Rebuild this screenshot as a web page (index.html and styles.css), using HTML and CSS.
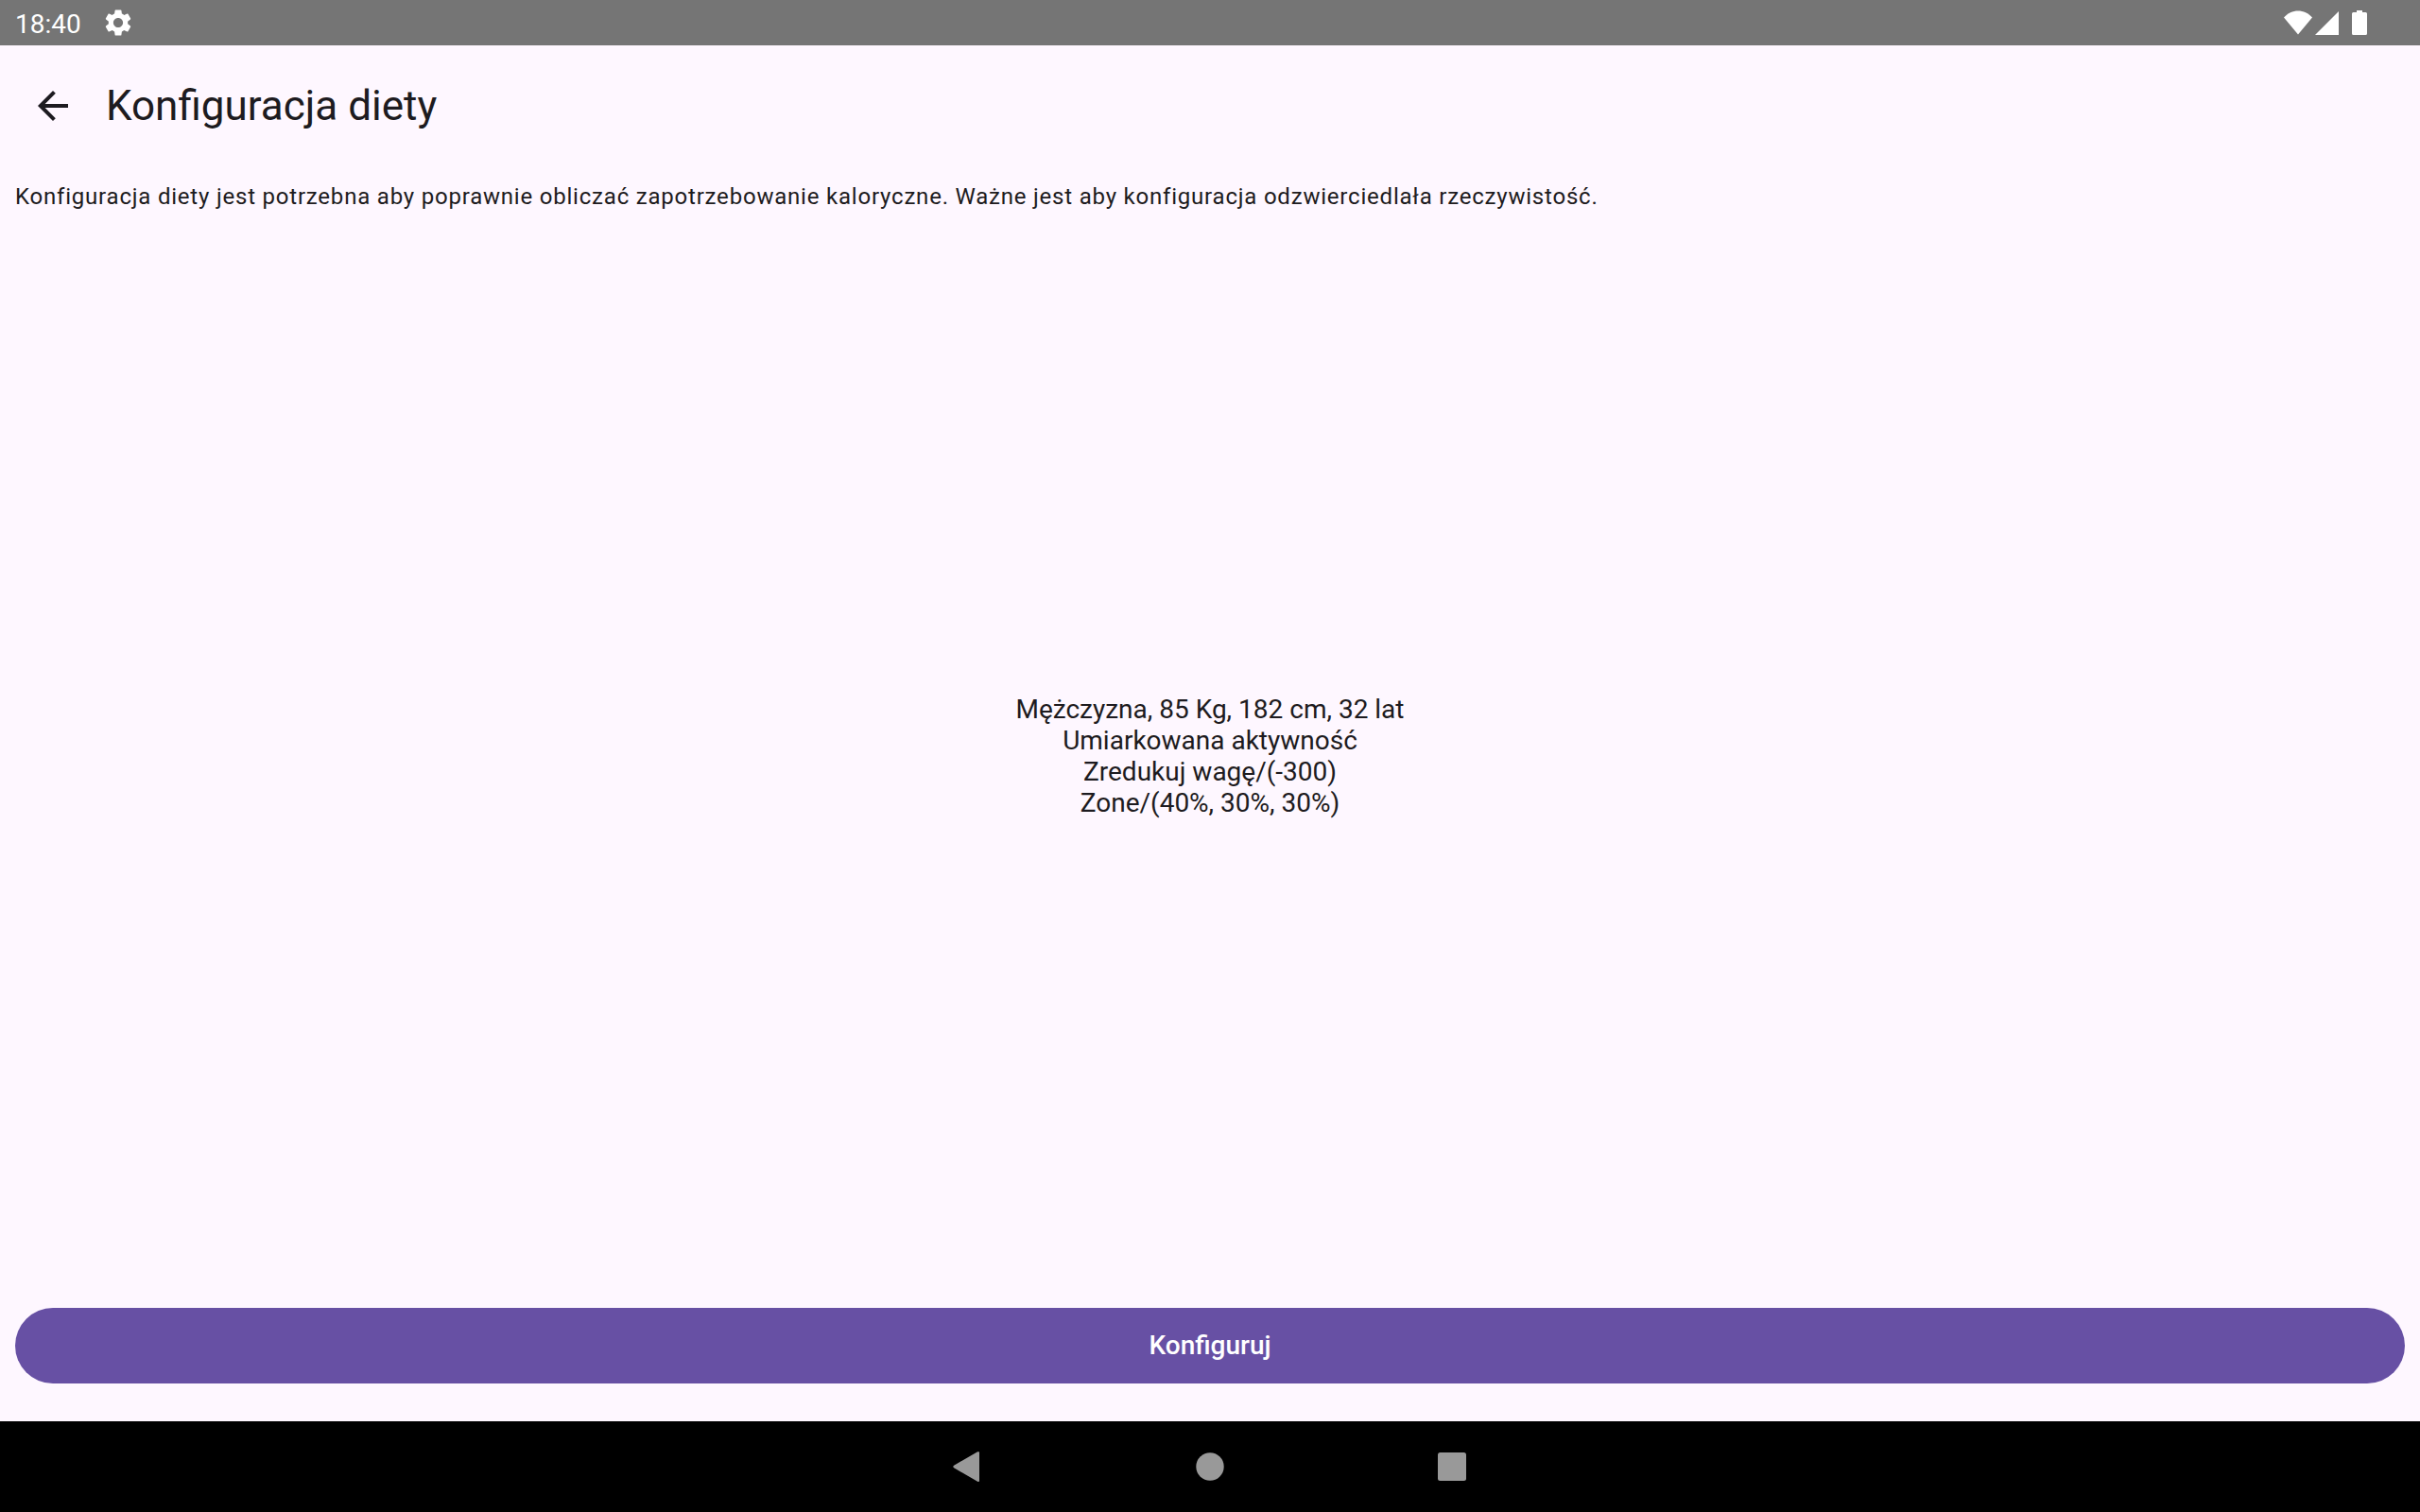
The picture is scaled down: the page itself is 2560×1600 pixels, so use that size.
FILE: index.html
```html
<!DOCTYPE html>
<html lang="pl">
<head>
<meta charset="utf-8">
<meta name="viewport" content="width=device-width, initial-scale=1">
<title>Konfiguracja diety</title>
<link rel="stylesheet" href="styles.css">
</head>
<body>
<div class="status-bar">
  <div class="status-start">
    <time class="clock">18:40</time>
    <svg class="gear" viewBox="0 0 24 24" aria-hidden="true"><path d="M19.14 12.94c.04-.3.06-.61.06-.94 0-.32-.02-.64-.07-.94l2.03-1.58c.18-.14.23-.41.12-.61l-1.92-3.32c-.12-.22-.37-.29-.59-.22l-2.39.96c-.5-.38-1.03-.7-1.62-.94l-.36-2.54c-.04-.24-.24-.41-.48-.41h-3.84c-.24 0-.43.17-.47.41l-.36 2.54c-.59.24-1.13.57-1.62.94l-2.39-.96c-.22-.08-.47 0-.59.22L2.74 8.87c-.12.21-.08.47.12.61l2.03 1.58c-.05.3-.09.63-.09.94s.02.64.07.94l-2.03 1.58c-.18.14-.23.41-.12.61l1.92 3.32c.12.22.37.29.59.22l2.39-.96c.5.38 1.03.7 1.62.94l.36 2.54c.05.24.24.41.48.41h3.84c.24 0 .44-.17.47-.41l.36-2.54c.59-.24 1.13-.56 1.62-.94l2.39.96c.22.08.47 0 .59-.22l1.92-3.32c.12-.22.07-.47-.12-.61l-2.01-1.58zM12 15.6c-1.98 0-3.6-1.62-3.6-3.6s1.62-3.6 3.6-3.6 3.6 1.62 3.6 3.6-1.62 3.6-3.6 3.6z"/></svg>
  </div>
  <div class="status-end">
    <svg class="wifi" viewBox="0 0 30 26" aria-hidden="true"><path d="M15 25.500L0 7.500C4 3 9.500 0.500 15 0.500S26 3 30 7.500Z"/></svg>
    <svg class="signal" viewBox="0 0 26 26" aria-hidden="true"><path d="M0 26L25 1V26Z"/></svg>
    <svg class="battery" viewBox="0 0 16 26" aria-hidden="true"><path d="M5 0H11V2H14.500Q16 2 16 3.500V24.500Q16 26 14.500 26H1.500Q0 26 0 24.500V3.500Q0 2 1.500 2H5Z"/></svg>
  </div>
</div>
<header class="app-bar">
  <button class="back" type="button" aria-label="Wstecz">
    <svg viewBox="0 0 24 24" aria-hidden="true"><path d="M20 11H7.830l5.590-5.590L12 4l-8 8 8 8 1.410-1.410L7.830 13H20v-2z"/></svg>
  </button>
  <h1 class="title">Konfiguracja diety</h1>
</header>
<main class="content">
  <p class="intro">Konfiguracja diety jest potrzebna aby poprawnie obliczać zapotrzebowanie kaloryczne. Ważne jest aby konfiguracja odzwierciedlała rzeczywistość.</p>
  <div class="summary">
    <p>Mężczyzna, 85 Kg, 182 cm, 32 lat</p>
    <p>Umiarkowana aktywność</p>
    <p>Zredukuj wagę/(-300)</p>
    <p>Zone/(40%, 30%, 30%)</p>
  </div>
  <button class="configure" type="button">Konfiguruj</button>
</main>
<nav class="nav-bar" aria-label="System">
  <button class="nav-button" type="button" aria-label="Wstecz"><svg viewBox="0 0 40 40" aria-hidden="true"><path d="M32 5.500V34.500Q32 37 29.700 35.500L5.500 21.500Q3 20 5.500 18.500L29.700 4.500Q32 3 32 5.500Z"/></svg></button>
  <button class="nav-button" type="button" aria-label="Ekran główny"><svg viewBox="0 0 40 40" aria-hidden="true"><circle cx="20" cy="20" r="14.700"/></svg></button>
  <button class="nav-button" type="button" aria-label="Ostatnie"><svg viewBox="0 0 40 40" aria-hidden="true"><rect x="5" y="5" width="30" height="30" rx="2.500"/></svg></button>
</nav>
</body>
</html>
```
FILE: styles.css
```css
* {
  box-sizing: border-box;
}

body {
  display: flex;
  flex-direction: column;
  min-height: 100vh;
  margin: 0;
  background: #fef7ff;
  color: #1d1b20;
  font-family: Roboto, "Liberation Sans", sans-serif;
}

p,
h1 {
  margin: 0;
}

button {
  border: 0;
  padding: 0;
  font-family: inherit;
  cursor: pointer;
}

svg {
  display: block;
  fill: currentColor;
}

.status-bar {
  display: flex;
  justify-content: space-between;
  align-items: center;
  height: 48px;
  padding: 0 56px 0 16px;
  background: #757575;
  color: #fff;
}

.status-start,
.status-end {
  display: flex;
  align-items: center;
}

.status-start {
  gap: 22px;
}

.clock {
  padding-top: 2px;
  font-size: 28px;
  line-height: 33px;
}

.gear {
  width: 34px;
  height: 34px;
}

.wifi {
  width: 30px;
  height: 26px;
  margin-right: 3px;
}

.signal {
  width: 26px;
  height: 26px;
  margin-right: 13px;
}

.battery {
  width: 16px;
  height: 26px;
}

.app-bar {
  display: flex;
  align-items: center;
  height: 128px;
  padding: 0 8px;
}

.back {
  display: grid;
  place-items: center;
  width: 96px;
  height: 96px;
  background: none;
  color: inherit;
}

.back svg {
  width: 48px;
  height: 48px;
}

.title {
  padding-left: 8px;
  font-size: 44px;
  font-weight: 400;
  line-height: 56px;
}

.content {
  flex: 1;
  display: flex;
  flex-direction: column;
  padding: 16px 16px 40px;
}

.intro {
  font-size: 24px;
  line-height: 32px;
  letter-spacing: 0.033em;
}

.summary {
  flex: 1;
  display: flex;
  flex-direction: column;
  justify-content: center;
  padding-bottom: 8px;
  font-size: 28px;
  line-height: 33px;
  text-align: center;
}

.configure {
  height: 80px;
  border-radius: 40px;
  background: #6750a4;
  color: #fff;
  font-size: 28px;
  font-weight: 500;
  line-height: 40px;
}

.nav-bar {
  display: flex;
  justify-content: center;
  height: 96px;
  background: #000;
  color: #999;
}

.nav-button {
  display: grid;
  place-items: center;
  width: 256px;
  background: none;
  color: inherit;
}

.nav-button svg {
  width: 40px;
  height: 40px;
}
```
